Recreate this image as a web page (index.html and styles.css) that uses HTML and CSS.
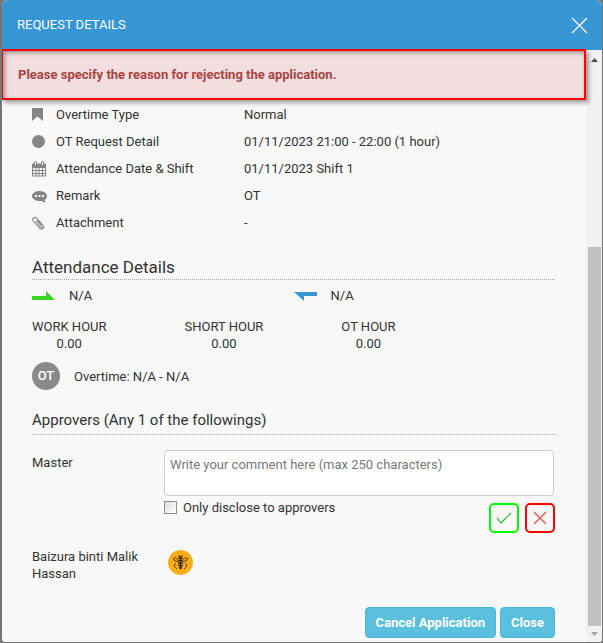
FILE: index.html
```html
<!DOCTYPE html>
<html lang="en">
<head>
<meta charset="utf-8">
<title>Request Details</title>
<link rel="stylesheet" href="styles.css">
</head>
<body>
<section class="modal" role="dialog" aria-labelledby="title">
  <header class="modal-header">
    <h1 id="title">REQUEST DETAILS</h1>
    <button class="dismiss" type="button" aria-label="Dismiss">
      <svg width="17" height="17" viewBox="0 0 17 17"><path d="M1 1l15 15M16 1L1 16" fill="none" stroke="#fff" stroke-width="1.3"/></svg>
    </button>
  </header>
  <div class="modal-body">
    <main class="content">
      <div class="alert" role="alert">Please specify the reason for rejecting the application.</div>
      <div class="details">
        <dl class="fields">
          <div class="field">
            <dt><svg width="16" height="16" viewBox="0 0 16 16"><path d="M0 1h11v13L5.500 9.500 0 14z" fill="#858585"/></svg>Overtime Type</dt>
            <dd>Normal</dd>
          </div>
          <div class="field">
            <dt><svg width="16" height="16" viewBox="0 0 16 16"><circle cx="6.500" cy="7.500" r="6.500" fill="#858585"/></svg>OT Request Detail</dt>
            <dd>01/11/2023 21:00 - 22:00 (1 hour)</dd>
          </div>
          <div class="field">
            <dt><svg width="16" height="16" viewBox="0 0 16 16"><path d="M.5 3h13v12H.5zM.5 6.500h13M.5 9.500h13M.5 12.500h13M4 6v9M7 6v9M10.500 6v9" fill="none" stroke="#858585"/><path d="M1 3h12v3H1z" fill="#858585"/><path d="M3.500 1.500v2.500M10.500 1.500v2.500" stroke="#858585" stroke-width="3" stroke-linecap="round"/><path d="M3.500 1v3M10.500 1v3" stroke="#f8f8f8"/></svg>Attendance Date &amp; Shift</dt>
            <dd>01/11/2023 Shift 1</dd>
          </div>
          <div class="field">
            <dt><svg width="16" height="16" viewBox="0 0 16 16"><path d="M7.500 3C3.400 3 0 5.200 0 8s3.400 5 7.500 5c.8 0 1.500-.1 2.200-.2 1 1 2.300 1.700 4 1.900-.7-.8-1-1.700-1-2.700C14.200 11 15 9.600 15 8c0-2.800-3.400-5-7.500-5z" fill="#858585"/><path d="M3 7h2v2H3zM6.500 7h2v2h-2zM10 7h2v2h-2z" fill="#f8f8f8"/></svg>Remark</dt>
            <dd>OT</dd>
          </div>
          <div class="field">
            <dt><svg width="16" height="16" viewBox="0 0 16 16"><path d="M3.500 6l5.700 6.200c1.300 1.300 3.100-.3 1.900-1.700L4.500 3.200C2.600 1.200-.6 3.700 1.200 6l6.500 7.200c2.200 2.300 5.300-.5 3.300-2.900L6 4.900M5 5.200l4.700 5.200" fill="none" stroke="#858585" stroke-width="1.100"/></svg>Attachment</dt>
            <dd>-</dd>
          </div>
        </dl>

        <h2 class="section-title large">Attendance Details</h2>
        <div class="clock">
          <span class="clock-item"><svg width="23" height="10" viewBox="0 0 23 10"><path d="M0 5h14V0l9 9H0z" fill="#38d61e"/></svg>N/A</span>
          <span class="clock-item"><svg width="23" height="10" viewBox="0 0 23 10"><path d="M23 5H10v5L0 1h23z" fill="#3797d5"/></svg>N/A</span>
        </div>
        <div class="hours">
          <div class="hour"><span>WORK HOUR</span><span>0.00</span></div>
          <div class="hour"><span>SHORT HOUR</span><span>0.00</span></div>
          <div class="hour"><span>OT HOUR</span><span>0.00</span></div>
        </div>
        <div class="overtime"><span class="ot-badge">OT</span>Overtime: N/A - N/A</div>

        <h2 class="section-title">Approvers (Any 1 of the followings)</h2>
        <div class="approver">
          <label for="comment">Master</label>
          <div class="review">
            <textarea id="comment" maxlength="250" placeholder="Write your comment here (max 250 characters)"></textarea>
            <div class="review-actions">
              <label class="disclose"><input type="checkbox">Only disclose to approvers</label>
              <div class="decisions">
                <button class="decision approve" type="button" aria-label="Approve"><svg width="16" height="14" viewBox="0 0 16 14"><path d="M1 7l4 5L15 2" fill="none" stroke="#2eb82e" stroke-width="1.200"/></svg></button>
                <button class="decision reject" type="button" aria-label="Reject"><svg width="14" height="14" viewBox="0 0 14 14"><path d="M1 1l12 12M13 1L1 13" fill="none" stroke="#ee5c5c" stroke-width="1.500"/></svg></button>
              </div>
            </div>
          </div>
        </div>
        <div class="approver second">
          <span class="name">Baizura binti Malik Hassan</span>
          <svg class="avatar" width="25" height="25" viewBox="0 0 25 25"><circle cx="12.500" cy="12.500" r="12.500" fill="#ffad14"/><g fill="none" stroke="#33270b"><path d="M10.500 5l1 2M14.500 5l-1 2M10 9.500C7 6.500 4.500 8 6 10c1 1 2.500 1.500 4 1.500M15 9.500c3-3 5.500-1.500 4 .5-1 1-2.500 1.500-4 1.500M8 13.500c-2.500 1-2 3.500 1 5.500M17 13.500c2.500 1 2 3.500-1 5.500" stroke-width=".9"/><path d="M10.500 8h4M10 10.500h5M10 13h5M10 15.500h5M11 17.800h3" stroke-width="1.400"/><path d="M12.500 6v13" stroke-width="1.400"/></g></svg>
        </div>
        <footer class="actions">
          <button type="button">Cancel Application</button>
          <button type="button">Close</button>
        </footer>
      </div>
    </main>
    <div class="scrollbar" aria-hidden="true">
      <svg width="7" height="4" viewBox="0 0 7 4"><path d="M0 4l3.500-4L7 4z" fill="#505050"/></svg>
      <div class="track"><div class="thumb"></div></div>
      <svg width="7" height="4" viewBox="0 0 7 4"><path d="M0 0l3.500 4L7 0z" fill="#a3a3a3"/></svg>
    </div>
  </div>
</section>
</body>
</html>
```
FILE: styles.css
```css
* { box-sizing: border-box; }
body {
  margin: 0;
  padding: 0 1px 1px 2px;
  background: #777;
  color: #333;
  font: 13px/17px Roboto, "Liberation Sans", sans-serif;
}
h1, h2, dl, dd { margin: 0; }
h1, h2 { font-weight: 400; }
button, textarea { font: inherit; }
button { cursor: pointer; }
svg { display: block; flex: none; }

.modal {
  display: flex;
  flex-direction: column;
  min-height: calc(100vh - 1px);
  border-radius: 6px 6px 3px 3px;
  overflow: hidden;
  background: #f8f8f8;
}
.modal-header {
  display: flex;
  align-items: center;
  justify-content: space-between;
  height: 50px;
  padding: 0 14px 0 15px;
  background: #3797d5;
  color: #fff;
}
.modal-header h1 { font-size: 13px; line-height: 20px; }
.dismiss { padding: 0; border: 0; background: none; }

.modal-body { display: flex; flex: 1; }
.content { flex: 1; min-width: 0; }
.alert {
  position: relative;
  margin: -1px 0 0 -1px;
  padding: 15px;
  border: 2px solid #f00;
  background: #f2dede;
  box-shadow: 3px 3px 4px rgba(0, 0, 0, .35), inset 2px 2px 4px rgba(0, 0, 0, .35);
  color: #a94442;
  font-weight: 700;
}
.details { padding: 1px 31px 4px 30px; }

.field { display: flex; align-items: center; height: 27px; }
.field dt {
  display: flex;
  align-items: center;
  gap: 8px;
  width: 212px;
}

.section-title {
  padding-bottom: 4px;
  border-bottom: 1px dotted #aaa;
  font-size: 15px;
  line-height: 20px;
}
.section-title.large {
  margin-top: 19px;
  padding-bottom: 0;
  font-size: 17px;
  line-height: 24px;
}

.clock { display: flex; margin-top: 7px; }
.clock-item {
  display: flex;
  align-items: center;
  gap: 14px;
  width: 50%;
}
.hours { display: flex; gap: 78px; margin-top: 14px; }
.hour { display: flex; flex-direction: column; align-items: center; }

.overtime {
  display: flex;
  align-items: center;
  gap: 14px;
  margin: 10px 0 20px;
}
.ot-badge {
  width: 28px;
  border-radius: 50%;
  background: #8a8a8a;
  color: #fff;
  font-weight: 500;
  line-height: 28px;
  text-align: center;
}

.approver { display: flex; margin-top: 15px; }
.approver > label, .name { flex: none; width: 132px; padding-top: 4px; }
.name { padding: 0 12px 0 0; }
.review { flex: 1; }
.review textarea {
  display: block;
  width: calc(100% - 1px);
  height: 46px;
  padding: 5px;
  border: 1px solid #ccc;
  border-radius: 4px;
  background: #fff;
  resize: none;
}
.review textarea::placeholder { color: #777; }
.review-actions {
  display: flex;
  align-items: flex-start;
  justify-content: space-between;
  padding-top: 3px;
}
.disclose { display: flex; align-items: center; gap: 6px; }
.disclose input {
  appearance: none;
  width: 13px;
  height: 13px;
  margin: 0;
  border: 1px solid #8e8f8f;
  background: linear-gradient(135deg, #ddd, #fff);
}
.disclose input:checked { background: #3797d5; }
.decisions { display: flex; gap: 6px; padding-top: 4px; }
.decision {
  display: grid;
  place-items: center;
  width: 30px;
  height: 30px;
  padding: 0;
  border: 2px solid #0f0;
  border-radius: 5px;
  background: none;
}
.reject { border-color: #f00; }
.avatar { margin: 2px 0 0 4px; }

.actions {
  display: flex;
  justify-content: flex-end;
  gap: 4px;
  margin-top: 25px;
}
.actions button {
  height: 31px;
  padding: 0 10px;
  border: 1px solid #46b8da;
  border-radius: 4px;
  background: #5bc0de;
  color: #fff;
  font-weight: 700;
}

.scrollbar {
  display: flex;
  flex-direction: column;
  align-items: center;
  gap: 6px;
  width: 16px;
  padding: 8px 0 6px;
  background: #f1f1f1;
}
.track { display: flex; flex-direction: column; justify-content: flex-end; flex: 1; width: 13px; }
.thumb { height: 68%; background: #c1c1c1; }
```
